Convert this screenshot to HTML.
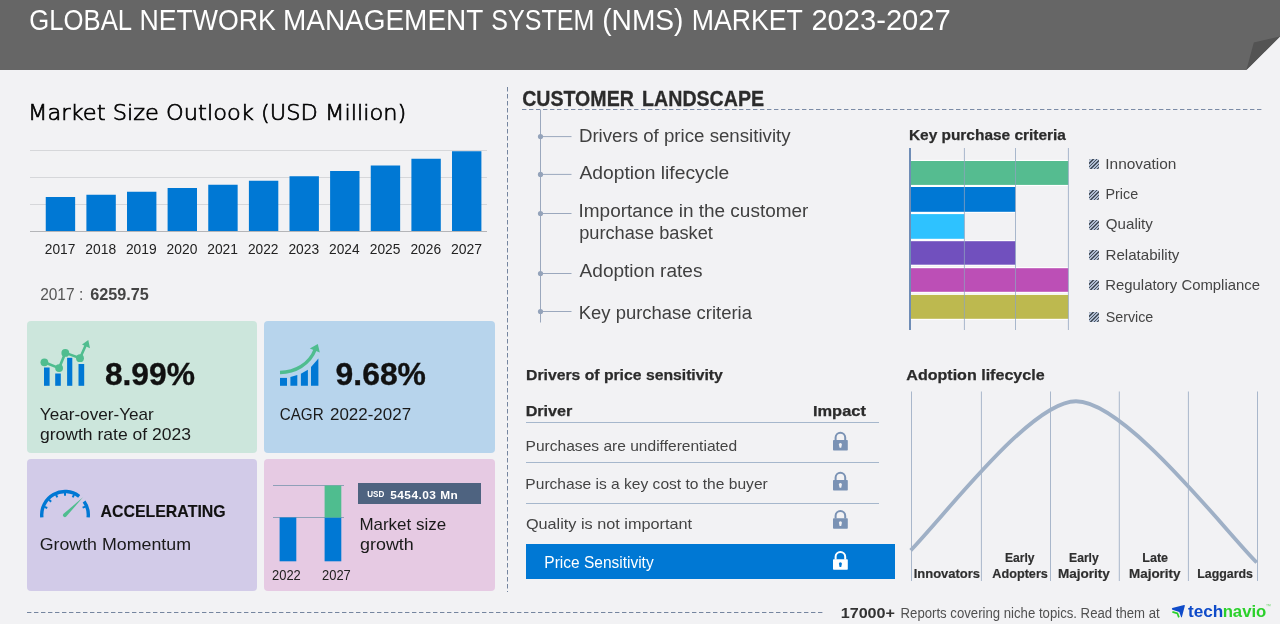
<!DOCTYPE html>
<html lang="en">
<head>
<meta charset="utf-8">
<title>Global Network Management System (NMS) Market 2023-2027</title>
<style>
*{box-sizing:border-box}
html,body{margin:0;padding:0;background:#f2f2f4}
body{width:1280px;height:624px;overflow:hidden;font-family:"Liberation Sans",sans-serif}
#page{position:relative;width:1280px;height:624px;overflow:hidden;will-change:transform}
.t{position:absolute;margin:0;padding:0;white-space:nowrap;transform-origin:0 0;font-weight:400;display:block}
svg.g{position:absolute;left:0;top:0;width:1280px;height:624px;overflow:visible;pointer-events:none}
h2.h2{-webkit-text-stroke:0.7px #000}
.big{-webkit-text-stroke:0.35px #111}
.acc{-webkit-text-stroke:0.15px #111}
.h2r{-webkit-text-stroke:0.3px #2b2b2b}
.h3,.th{-webkit-text-stroke:0.25px #2b2b2b}
.al{-webkit-text-stroke:0.2px #333}
h1,h2,h3,p{margin:0;font-size:inherit;font-weight:inherit}
.card{position:absolute;border-radius:4px}
#c1{left:27px;top:321px;width:230px;height:132px;background:#cce6dc}
#c2{left:264px;top:321px;width:231px;height:132px;background:#b7d4ec}
#c3{left:27px;top:459px;width:230px;height:132px;background:#d2cbe8}
#c4{left:264px;top:459px;width:231px;height:132px;background:#e6cae3}
.sw{position:absolute;left:1089px;width:10.2px;height:10px;border-radius:1.5px;background:repeating-linear-gradient(135deg,#47515d 0,#47515d 1.3px,#b0bdd2 1.3px,#b0bdd2 2.5px)}
.pill{position:absolute;left:358px;top:483px;width:123px;height:21px;background:#4e6380}
.psrow{position:absolute;left:526px;top:544px;width:369px;height:35px;background:#0078d4}
</style>
</head>
<body>
<div id="page">

<header>
<svg class="g" viewBox="0 0 1280 624" aria-hidden="true">
  <polygon points="0,0 1280,0 1280,36.4 1246.4,70 0,70" fill="#666666"/>
  <polygon points="1253.8,42.4 1280,36.4 1246.4,70" fill="#535353"/>
</svg>
<h1>
<span class="t title" style='left:29px;top:6px;font-size:29.2px;line-height:29.2px;height:29.2px;color:#ffffff;transform:translateX(0.37px) scaleX(0.8797);'>GLOBAL</span>
<span class="t title" style='left:139px;top:6px;font-size:29.2px;line-height:29.2px;height:29.2px;color:#ffffff;transform:translateX(0.50px) scaleX(0.9142);'>NETWORK</span>
<span class="t title" style='left:282px;top:6px;font-size:29.2px;line-height:29.2px;height:29.2px;color:#ffffff;transform:translateX(0.95px) scaleX(0.9579);'>MANAGEMENT</span>
<span class="t title" style='left:491px;top:6px;font-size:29.2px;line-height:29.2px;height:29.2px;color:#ffffff;transform:translateX(0.27px) scaleX(0.8580);'>SYSTEM</span>
<span class="t title" style='left:602px;top:6px;font-size:29.2px;line-height:29.2px;height:29.2px;color:#ffffff;transform:translateX(0.23px) scaleX(0.9635);'>(NMS)</span>
<span class="t title" style='left:691px;top:6px;font-size:29.2px;line-height:29.2px;height:29.2px;color:#ffffff;transform:translateX(0.78px) scaleX(0.9137);'>MARKET</span>
<span class="t title" style='left:811px;top:6px;font-size:29.2px;line-height:29.2px;height:29.2px;color:#ffffff;transform:translateX(0.38px) scaleX(0.9983);'>2023-2027</span>
</h1>
</header>

<main>
<section id="market-size">
<h2 class="t h2" style='left:28px;top:102px;font-size:21.8px;line-height:21.8px;height:21.8px;font-family:"DejaVu Sans Light","Liberation Sans",sans-serif;color:#000000;transform:translateX(0.07px) scaleX(1.0336);'>Market Size Outlook (USD Million)</h2>
<svg class="g" viewBox="0 0 1280 624" aria-hidden="true">
  <g stroke="#d6d7da" stroke-width="1" shape-rendering="crispEdges">
    <line x1="30" y1="150.5" x2="487" y2="150.5"/>
    <line x1="30" y1="177.5" x2="487" y2="177.5"/>
    <line x1="30" y1="204.5" x2="487" y2="204.5"/>
  </g>
  <g fill="#0078d4">
    <rect x="45.75" y="197" width="29.4" height="34.4"/>
    <rect x="86.4" y="194.75" width="29.4" height="36.65"/>
    <rect x="127" y="191.75" width="29.4" height="39.65"/>
    <rect x="167.6" y="188" width="29.4" height="43.4"/>
    <rect x="208.25" y="184.75" width="29.4" height="46.65"/>
    <rect x="248.9" y="180.75" width="29.4" height="50.65"/>
    <rect x="289.5" y="176.25" width="29.4" height="55.15"/>
    <rect x="330.1" y="171" width="29.4" height="60.4"/>
    <rect x="370.75" y="165.5" width="29.4" height="65.9"/>
    <rect x="411.4" y="158.75" width="29.4" height="72.65"/>
    <rect x="452" y="151.25" width="29.4" height="80.15"/>
  </g>
  <line x1="30" y1="231.5" x2="487" y2="231.5" stroke="#b4b5b8" stroke-width="1" shape-rendering="crispEdges"/>
</svg>
<div class="years">
<span class="t yr" style='left:44px;top:242px;font-size:14px;line-height:14px;height:14px;color:#222222;transform:translateX(0.77px) scaleX(0.9808);'>2017</span>
<span class="t yr" style='left:85px;top:242px;font-size:14px;line-height:14px;height:14px;color:#222222;transform:translateX(0.30px) scaleX(0.9907);'>2018</span>
<span class="t yr" style='left:125px;top:242px;font-size:14px;line-height:14px;height:14px;color:#222222;transform:translateX(0.92px) scaleX(0.9869);'>2019</span>
<span class="t yr" style='left:166px;top:242px;font-size:14px;line-height:14px;height:14px;color:#222222;transform:translateX(0.51px) scaleX(0.9897);'>2020</span>
<span class="t yr" style='left:207px;top:242px;font-size:14px;line-height:14px;height:14px;color:#222222;transform:translateX(0.19px) scaleX(0.9887);'>2021</span>
<span class="t yr" style='left:247px;top:242px;font-size:14px;line-height:14px;height:14px;color:#222222;transform:translateX(0.90px) scaleX(0.9808);'>2022</span>
<span class="t yr" style='left:288px;top:242px;font-size:14px;line-height:14px;height:14px;color:#222222;transform:translateX(0.42px) scaleX(0.9851);'>2023</span>
<span class="t yr" style='left:329px;top:242px;font-size:14px;line-height:14px;height:14px;color:#222222;transform:translateX(0.02px) scaleX(0.9802);'>2024</span>
<span class="t yr" style='left:369px;top:242px;font-size:14px;line-height:14px;height:14px;color:#222222;transform:translateX(0.76px) scaleX(0.9834);'>2025</span>
<span class="t yr" style='left:410px;top:242px;font-size:14px;line-height:14px;height:14px;color:#222222;transform:translateX(0.49px) scaleX(0.9802);'>2026</span>
<span class="t yr" style='left:450px;top:242px;font-size:14px;line-height:14px;height:14px;color:#222222;transform:translateX(0.93px) scaleX(0.9985);'>2027</span>
</div>
<p class="baseval">
<span class="t base-l" style='left:40px;top:287px;font-size:16px;line-height:16px;height:16px;color:#555555;transform:translateX(0.15px) scaleX(0.9674);'>2017 :</span>
<b class="t base-v" style='left:90px;top:287px;font-size:16px;line-height:16px;height:16px;font-weight:700;color:#444444;transform:translateX(0.20px) scaleX(1.0138);'>6259.75</b>
</p>
</section>

<section id="stats">
<div class="card" id="c1"></div>
<div class="card" id="c2"></div>
<div class="card" id="c3"></div>
<div class="card" id="c4"></div>
<div class="pill"></div>
<svg class="g" viewBox="0 0 1280 624" aria-hidden="true">
  <!-- yoy icon -->
  <g fill="#0078d4">
    <rect x="44" y="367.5" width="5.6" height="18.3"/>
    <rect x="55.2" y="373.5" width="5.6" height="12.3"/>
    <rect x="67.1" y="357.8" width="5.2" height="28"/>
    <rect x="78.5" y="364" width="5.7" height="21.8"/>
  </g>
  <g fill="#4fbd8f" stroke="#4fbd8f">
    <polyline points="44.4,362.3 59.1,368.1 65.3,352.9 80,358.2 86.3,344" fill="none" stroke-width="2.6"/>
    <circle cx="44.4" cy="362.3" r="3.9" stroke="none"/>
    <circle cx="59.1" cy="368.1" r="3.9" stroke="none"/>
    <circle cx="65.3" cy="352.9" r="3.9" stroke="none"/>
    <circle cx="80" cy="358.2" r="3.9" stroke="none"/>
    <polygon points="88.3,340 82,344.6 90,348.2" stroke="none"/>
  </g>
  <!-- cagr icon -->
  <g fill="#0078d4">
    <polygon points="280,377.9 287,377.9 287,385.8 280,385.8"/>
    <polygon points="290.4,376.9 297.3,375 297.3,385.8 290.4,385.8"/>
    <polygon points="300.9,373.8 307.9,369.8 307.9,385.8 300.9,385.8"/>
    <polygon points="311,366.9 318.4,358.5 318.4,385.8 311,385.8"/>
  </g>
  <path d="M280,372.5 C295,372 309.5,364.5 315.2,349.5" fill="none" stroke="#4fbd8f" stroke-width="3.5"/>
  <polygon points="317.8,344 309.8,348.6 319.8,352.6" fill="#4fbd8f"/>
  <!-- gauge icon -->
  <path d="M41.85,517.40 A23.3,23.3 0 0 1 79.18,496.31" fill="none" stroke="#0078d4" stroke-width="3.4"/>
  <path d="M84.09,501.44 A23.3,23.3 0 0 1 88.15,517.40" fill="none" stroke="#0078d4" stroke-width="3.4"/>
  <g stroke="#0078d4" stroke-width="2">
    <line x1="44.46" y1="506.92" x2="47.26" y2="507.99"/>
    <line x1="48.96" y1="499.74" x2="51.15" y2="501.79"/>
    <line x1="56.05" y1="494.70" x2="57.27" y2="497.44"/>
    <line x1="65.00" y1="492.80" x2="65.00" y2="495.80"/>
    <line x1="73.95" y1="494.70" x2="72.73" y2="497.44"/>
    <line x1="85.40" y1="506.56" x2="82.62" y2="507.68"/>
  </g>
  <path d="M83.20,497.10 L66.24,516.55 A1.9,1.9 0 0 1 63.56,513.85 Z" fill="#4fbd8f"/>
  <!-- mini chart -->
  <g stroke="#8fa0b8" stroke-width="1" shape-rendering="crispEdges">
    <line x1="273" y1="485.5" x2="344" y2="485.5"/>
    <line x1="273" y1="517.5" x2="344" y2="517.5"/>
  </g>
  <rect x="279.6" y="517.5" width="16.7" height="43.8" fill="#0078d4"/>
  <rect x="324.6" y="517.5" width="16.7" height="43.8" fill="#0078d4"/>
  <rect x="324.6" y="485.5" width="16.7" height="32" fill="#4fbd8f"/>
</svg>
<article class="stat">
<strong class="t big" style='left:104px;top:358px;font-size:32px;line-height:32px;height:32px;font-weight:700;color:#111111;transform:translateX(0.88px) scaleX(0.9922);'>8.99%</strong>
<span class="t cap" style='left:39px;top:406px;font-size:17px;line-height:17px;height:17px;color:#1a1a1a;transform:translateX(0.80px) scaleX(1.0078);'>Year-over-Year</span>
<span class="t cap" style='left:39px;top:426px;font-size:17px;line-height:17px;height:17px;color:#1a1a1a;transform:translateX(0.94px) scaleX(1.0316);'>growth rate of 2023</span>
</article>
<article class="stat">
<strong class="t big" style='left:335px;top:358px;font-size:32px;line-height:32px;height:32px;font-weight:700;color:#111111;transform:translateX(0.60px) scaleX(0.9958);'>9.68%</strong>
<span class="t cap" style='left:279px;top:406px;font-size:17px;line-height:17px;height:17px;color:#1a1a1a;transform:translateX(0.72px) scaleX(0.8956);'>CAGR</span>
<span class="t cap" style='left:330px;top:406px;font-size:17px;line-height:17px;height:17px;color:#1a1a1a;transform:translateX(0.01px) scaleX(0.9969);'>2022-2027</span>
</article>
<article class="stat">
<strong class="t acc" style='left:100px;top:503px;font-size:17px;line-height:17px;height:17px;font-weight:700;color:#111111;transform:translateX(0.46px) scaleX(0.9359);'>ACCELERATING</strong>
<span class="t cap" style='left:39px;top:536px;font-size:17px;line-height:17px;height:17px;color:#1a1a1a;transform:translateX(0.63px) scaleX(1.0471);'>Growth Momentum</span>
</article>
<article class="stat">
<span class="t usd" style='left:367px;top:489px;font-size:9.6px;line-height:9.6px;height:9.6px;font-weight:700;color:#ffffff;transform:translateX(0.29px) scaleX(0.8387);'>USD</span>
<b class="t usdv" style='left:390px;top:489px;font-size:11.6px;line-height:11.6px;height:11.6px;font-weight:700;letter-spacing:0.45px;color:#ffffff;transform:translateX(0.17px) scaleX(1.0252);'>5454.03 Mn</b>
<span class="t cap" style='left:359px;top:516px;font-size:17px;line-height:17px;height:17px;color:#1a1a1a;transform:translateX(0.40px) scaleX(0.9971);'>Market size</span>
<span class="t cap" style='left:360px;top:536px;font-size:17px;line-height:17px;height:17px;color:#1a1a1a;transform:translateX(0.04px) scaleX(1.0529);'>growth</span>
<span class="t yr2" style='left:271px;top:568px;font-size:14px;line-height:14px;height:14px;color:#222222;transform:translateX(0.99px) scaleX(0.9251);'>2022</span>
<span class="t yr2" style='left:321px;top:568px;font-size:14px;line-height:14px;height:14px;color:#222222;transform:translateX(0.99px) scaleX(0.9251);'>2027</span>
</article>
</section>

<section id="customer-landscape">
<svg class="g" viewBox="0 0 1280 624" aria-hidden="true">
  <line x1="507.5" y1="87" x2="507.5" y2="592" stroke="#75859f" stroke-width="1" stroke-dasharray="4.5 2.5"/>
  <line x1="522" y1="109.5" x2="1262" y2="109.5" stroke="#7b8ba6" stroke-width="1" stroke-dasharray="4.4 2.6"/>
  <g stroke="#9ba8bd" stroke-width="1" fill="#94a3ba">
    <line x1="540.5" y1="110" x2="540.5" y2="322.5"/>
    <line x1="540.5" y1="136.6" x2="571.5" y2="136.6"/>
    <line x1="540.5" y1="174.4" x2="571.5" y2="174.4"/>
    <line x1="540.5" y1="213.5" x2="571.5" y2="213.5"/>
    <line x1="540.5" y1="273.5" x2="571.5" y2="273.5"/>
    <line x1="540.5" y1="311.5" x2="571.5" y2="311.5"/>
    <circle cx="540.5" cy="136.6" r="2.6" stroke="none"/>
    <circle cx="540.5" cy="174.4" r="2.6" stroke="none"/>
    <circle cx="540.5" cy="213.5" r="2.6" stroke="none"/>
    <circle cx="540.5" cy="273.5" r="2.6" stroke="none"/>
    <circle cx="540.5" cy="311.5" r="2.6" stroke="none"/>
  </g>
</svg>
<h2>
<span class="t h2r" style='left:522px;top:88px;font-size:22.4px;line-height:22.4px;height:22.4px;font-weight:700;color:#2b2b2b;transform:translateX(0.16px) scaleX(0.8745);'>CUSTOMER</span>
<span class="t h2r" style='left:642px;top:88px;font-size:22.4px;line-height:22.4px;height:22.4px;font-weight:700;color:#2b2b2b;transform:translateX(0.09px) scaleX(0.8757);'>LANDSCAPE</span>
</h2>
<div class="list">
<span class="t li" style='left:578px;top:127px;font-size:18px;line-height:18px;height:18px;color:#404040;transform:translateX(0.89px) scaleX(1.0375);'>Drivers of price sensitivity</span>
<span class="t li" style='left:579px;top:164px;font-size:18px;line-height:18px;height:18px;color:#404040;transform:translateX(0.49px) scaleX(1.0691);'>Adoption lifecycle</span>
<span class="t li" style='left:578px;top:202px;font-size:18px;line-height:18px;height:18px;color:#404040;transform:translateX(0.55px) scaleX(1.0537);'>Importance in the customer</span>
<span class="t li" style='left:579px;top:224px;font-size:18px;line-height:18px;height:18px;color:#404040;transform:translateX(0.19px) scaleX(1.0117);'>purchase basket</span>
<span class="t li" style='left:579px;top:262px;font-size:18px;line-height:18px;height:18px;color:#404040;transform:translateX(0.58px) scaleX(1.0582);'>Adoption rates</span>
<span class="t li" style='left:578px;top:304px;font-size:18px;line-height:18px;height:18px;color:#404040;transform:translateX(0.75px) scaleX(1.0243);'>Key purchase criteria</span>
</div>

<div id="kpc">
<h3 class="t h3" style='left:908px;top:127px;font-size:15px;line-height:15px;height:15px;font-weight:700;color:#2b2b2b;transform:translateX(0.89px) scaleX(1.0293);'>Key purchase criteria</h3>
<svg class="g" viewBox="0 0 1280 624" aria-hidden="true">
  <g fill="#ffffff">
    <rect x="911" y="159.9" width="157.3" height="26.1"/>
    <rect x="911" y="185.9" width="104.5" height="27.0"/>
    <rect x="911" y="213.0" width="53.4" height="26.9"/>
    <rect x="911" y="240.1" width="104.5" height="25.7"/>
    <rect x="911" y="267.1" width="157.3" height="25.8"/>
    <rect x="911" y="293.8" width="157.3" height="26.1"/>
  </g>
  <g>
    <rect x="911" y="161.0" width="157.3" height="23.9" fill="#55bc90"/>
    <rect x="911" y="187.0" width="104.5" height="24.8" fill="#0078d4"/>
    <rect x="911" y="214.1" width="53.4" height="24.7" fill="#2ec2ff"/>
    <rect x="911" y="241.2" width="104.5" height="23.5" fill="#7150be"/>
    <rect x="911" y="268.2" width="157.3" height="23.6" fill="#bc4fb6"/>
    <rect x="911" y="294.9" width="157.3" height="23.9" fill="#bdb94f"/>
  </g>
  <g stroke="#8fa3bf" stroke-width="1" opacity="0.75">
    <line x1="964.4" y1="148" x2="964.4" y2="330"/>
    <line x1="1015.5" y1="148" x2="1015.5" y2="330"/>
    <line x1="1068.4" y1="148" x2="1068.4" y2="330"/>
  </g>
  <line x1="910" y1="148" x2="910" y2="330" stroke="#6f8db6" stroke-width="2"/>
</svg>
<div class="legend">
<i class="sw" style="top:159.2px"></i>
<i class="sw" style="top:189.6px"></i>
<i class="sw" style="top:219.5px"></i>
<i class="sw" style="top:250.0px"></i>
<i class="sw" style="top:280.1px"></i>
<i class="sw" style="top:311.8px"></i>
<span class="t lg" style='left:1105px;top:156px;font-size:15px;line-height:15px;height:15px;color:#444444;transform:translateX(0.33px) scaleX(1.0271);'>Innovation</span>
<span class="t lg" style='left:1105px;top:186px;font-size:15px;line-height:15px;height:15px;color:#444444;transform:translateX(0.48px) scaleX(0.9548);'>Price</span>
<span class="t lg" style='left:1105px;top:216px;font-size:15px;line-height:15px;height:15px;color:#444444;transform:translateX(0.87px) scaleX(1.0058);'>Quality</span>
<span class="t lg" style='left:1105px;top:247px;font-size:15px;line-height:15px;height:15px;color:#444444;transform:translateX(0.50px) scaleX(1.0075);'>Relatability</span>
<span class="t lg" style='left:1105px;top:277px;font-size:15px;line-height:15px;height:15px;color:#444444;transform:translateX(0.30px) scaleX(0.9920);'>Regulatory Compliance</span>
<span class="t lg" style='left:1105px;top:309px;font-size:15px;line-height:15px;height:15px;color:#444444;transform:translateX(0.66px) scaleX(0.9529);'>Service</span>
</div>
</div>

<div id="dps">
<div class="psrow"></div>
<svg class="g" viewBox="0 0 1280 624" aria-hidden="true">
  <g stroke="#a6b7cc" stroke-width="1" shape-rendering="crispEdges">
    <line x1="526" y1="422.5" x2="879" y2="422.5"/>
    <line x1="526" y1="462.5" x2="879" y2="462.5"/>
    <line x1="526" y1="503.5" x2="879" y2="503.5"/>
  </g>
  <g transform="translate(833,432)">
    <path d="M2.6,8.2 V5.6 A4.8,4.8 0 0 1 12.2,5.6 V8.2" fill="none" stroke="#7a92b4" stroke-width="2"/>
    <rect x="0" y="8" width="14.8" height="10.5" rx="0.8" fill="#7a92b4"/>
    <path d="M5.9,12.6 a1.5,1.5 0 1 1 3,0 l-0.7,3.2 h-1.6 z" fill="#f2f2f4"/>
  </g>
  <g transform="translate(833,472)">
    <path d="M2.6,8.2 V5.6 A4.8,4.8 0 0 1 12.2,5.6 V8.2" fill="none" stroke="#7a92b4" stroke-width="2"/>
    <rect x="0" y="8" width="14.8" height="10.5" rx="0.8" fill="#7a92b4"/>
    <path d="M5.9,12.6 a1.5,1.5 0 1 1 3,0 l-0.7,3.2 h-1.6 z" fill="#f2f2f4"/>
  </g>
  <g transform="translate(833,510.2)">
    <path d="M2.6,8.2 V5.6 A4.8,4.8 0 0 1 12.2,5.6 V8.2" fill="none" stroke="#7a92b4" stroke-width="2"/>
    <rect x="0" y="8" width="14.8" height="10.5" rx="0.8" fill="#7a92b4"/>
    <path d="M5.9,12.6 a1.5,1.5 0 1 1 3,0 l-0.7,3.2 h-1.6 z" fill="#f2f2f4"/>
  </g>
  <g transform="translate(833,551.2)">
    <path d="M2.6,8.2 V5.6 A4.8,4.8 0 0 1 12.2,5.6 V8.2" fill="none" stroke="#ffffff" stroke-width="2"/>
    <rect x="0" y="8" width="14.8" height="10.5" rx="0.8" fill="#ffffff"/>
    <path d="M5.9,12.6 a1.5,1.5 0 1 1 3,0 l-0.7,3.2 h-1.6 z" fill="#0078d4"/>
  </g>
</svg>
<h3 class="t h3" style='left:526px;top:367px;font-size:15px;line-height:15px;height:15px;font-weight:700;color:#2b2b2b;transform:translateX(0.02px) scaleX(1.0494);'>Drivers of price sensitivity</h3>
<span class="t th" style='left:525px;top:403px;font-size:15px;line-height:15px;height:15px;font-weight:700;color:#2b2b2b;transform:translateX(0.63px) scaleX(1.0792);'>Driver</span>
<span class="t th" style='left:812px;top:403px;font-size:15px;line-height:15px;height:15px;font-weight:700;color:#2b2b2b;transform:translateX(0.94px) scaleX(1.0946);'>Impact</span>
<span class="t td" style='left:525px;top:438px;font-size:15px;line-height:15px;height:15px;color:#444444;transform:translateX(0.58px) scaleX(1.0371);'>Purchases are undifferentiated</span>
<span class="t td" style='left:525px;top:476px;font-size:15px;line-height:15px;height:15px;color:#444444;transform:translateX(0.34px) scaleX(1.0383);'>Purchase is a key cost to the buyer</span>
<span class="t td" style='left:525px;top:516px;font-size:15px;line-height:15px;height:15px;color:#444444;transform:translateX(0.88px) scaleX(1.0834);'>Quality is not important</span>
<span class="t ps" style='left:544px;top:555px;font-size:16px;line-height:16px;height:16px;color:#ffffff;transform:translateX(0.33px) scaleX(0.9682);'>Price Sensitivity</span>
</div>

<div id="adoption">
<svg class="g" viewBox="0 0 1280 624" aria-hidden="true">
  <g stroke="#a9b7cb" stroke-width="1">
    <line x1="911.5" y1="391.5" x2="911.5" y2="581"/>
    <line x1="981.4" y1="391.5" x2="981.4" y2="581"/>
    <line x1="1050.5" y1="391.5" x2="1050.5" y2="581"/>
    <line x1="1119.3" y1="391.5" x2="1119.3" y2="581"/>
    <line x1="1188.4" y1="391.5" x2="1188.4" y2="581"/>
    <line x1="1257.5" y1="391.5" x2="1257.5" y2="581"/>
  </g>
  <path d="M910.7,550.4 C950.7,508.4 1032,401.25 1076,401.25 C1125.5,401.25 1225,530.8 1256.75,562.5" fill="none" stroke="#9fb0c6" stroke-width="3.8"/>
</svg>
<h3 class="t h3" style='left:906px;top:367px;font-size:15px;line-height:15px;height:15px;font-weight:700;color:#2b2b2b;transform:translateX(0.30px) scaleX(1.0702);'>Adoption lifecycle</h3>
<span class="t al" style='left:913px;top:567px;font-size:13.4px;line-height:13.4px;height:13.4px;font-weight:700;color:#2e2e2e;transform:translateX(0.67px) scaleX(0.9704);'>Innovators</span>
<span class="t al" style='left:1004px;top:551px;font-size:13.4px;line-height:13.4px;height:13.4px;font-weight:700;color:#2e2e2e;transform:translateX(0.97px) scaleX(0.9031);'>Early</span>
<span class="t al" style='left:992px;top:567px;font-size:13.4px;line-height:13.4px;height:13.4px;font-weight:700;color:#2e2e2e;transform:translateX(0.34px) scaleX(0.9448);'>Adopters</span>
<span class="t al" style='left:1069px;top:551px;font-size:13.4px;line-height:13.4px;height:13.4px;font-weight:700;color:#2e2e2e;transform:translateX(0.04px) scaleX(0.9061);'>Early</span>
<span class="t al" style='left:1057px;top:567px;font-size:13.4px;line-height:13.4px;height:13.4px;font-weight:700;color:#2e2e2e;transform:translateX(0.93px) scaleX(1.0108);'>Majority</span>
<span class="t al" style='left:1142px;top:551px;font-size:13.4px;line-height:13.4px;height:13.4px;font-weight:700;color:#2e2e2e;transform:translateX(0.33px) scaleX(0.9357);'>Late</span>
<span class="t al" style='left:1129px;top:567px;font-size:13.4px;line-height:13.4px;height:13.4px;font-weight:700;color:#2e2e2e;transform:translateX(0.02px) scaleX(1.0028);'>Majority</span>
<span class="t al" style='left:1197px;top:567px;font-size:13.4px;line-height:13.4px;height:13.4px;font-weight:700;color:#2e2e2e;transform:translateX(0.27px) scaleX(0.9224);'>Laggards</span>
</div>
</section>
</main>

<footer>
<svg class="g" viewBox="0 0 1280 624" aria-hidden="true">
  <line x1="27" y1="612.5" x2="823" y2="612.5" stroke="#75859f" stroke-width="1" stroke-dasharray="4.4 2.6"/>
  <path d="M1172.3,607.9 L1184.1,605.1 Q1185.1,604.9 1184.8,605.9 L1181.9,617.1 Q1181.5,618 1181.1,617.1 L1179.3,611.9 L1172.4,609.7 Q1171.3,609 1172.3,607.9 Z" fill="#0f4bc9"/>
  <path d="M1172.4,611.9 L1177.4,613.4 L1178.9,617.4" fill="none" stroke="#2bd02b" stroke-width="1.7" stroke-linejoin="round"/>
</svg>
<b class="t ft-n" style='left:840px;top:605px;font-size:15px;line-height:15px;height:15px;font-weight:700;color:#333333;transform:translateX(0.67px) scaleX(1.0770);'>17000+</b>
<span class="t ft-t" style='left:900px;top:606px;font-size:14px;line-height:14px;height:14px;color:#505050;transform:translateX(0.56px) scaleX(0.9406);'>Reports covering niche topics. Read them at</span>
<span class="t logo-a" style='left:1187px;top:603px;font-size:16.3px;line-height:16.3px;height:16.3px;font-weight:700;color:#0f4bc9;transform:translateX(0.96px) scaleX(1.0537);'>tech</span>
<span class="t logo-b" style='left:1222px;top:603px;font-size:16.3px;line-height:16.3px;height:16.3px;font-weight:700;color:#2bd02b;transform:translateX(0.64px) scaleX(1.0276);'>navio</span>
<span class="t tm" style='left:1265px;top:603px;font-size:6px;line-height:6px;height:6px;color:#6fd96f;transform:translateX(0.51px) scaleX(0.8916);'>™</span>
</footer>

</div>
</body>
</html>
